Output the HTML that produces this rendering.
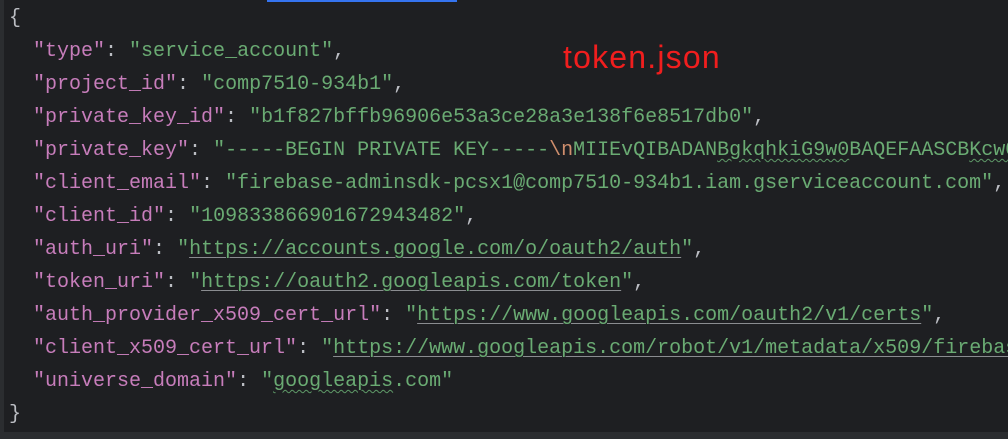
<!DOCTYPE html>
<html><head><style>
html,body{margin:0;padding:0;}
body{width:1008px;height:439px;background:#1e1f22;position:relative;overflow:hidden;font-family:"Liberation Mono",monospace;}
.strip{position:absolute;left:0;top:0;width:4px;height:439px;background:#2b2d30;}
.bot{position:absolute;left:0;top:432px;width:1008px;height:7px;background:#2b2d30;}
.blue{position:absolute;left:267px;top:0;width:190px;height:2px;background:#3574f0;}
pre{position:absolute;left:9px;top:2px;margin:0;font-family:"Liberation Mono",monospace;font-size:20px;line-height:33px;color:#bcbec4;white-space:pre;}
.k{color:#c77dbb}.s{color:#6aab73}.e{color:#cf8e6d}
.u{text-decoration:underline;text-decoration-color:#8a8c90;text-decoration-thickness:1px;text-underline-offset:3px}
.w{text-decoration:underline wavy #5f9a68;text-decoration-thickness:1px;text-underline-offset:3px}
.t{position:absolute;left:563px;top:39px;font-family:"Liberation Sans",sans-serif;font-size:32px;letter-spacing:1.2px;color:#f01e1e;}
</style></head><body>
<div class="strip"></div><div class="blue"></div><div class="bot"></div>
<pre>{
  <span class="k">"type"</span>: <span class="s">"service_account"</span>,
  <span class="k">"project_id"</span>: <span class="s">"comp7510-934b1"</span>,
  <span class="k">"private_key_id"</span>: <span class="s">"b1f827bffb96906e53a3ce28a3e138f6e8517db0"</span>,
  <span class="k">"private_key"</span>: <span class="s">"-----BEGIN PRIVATE KEY-----<span class="e">\n</span>MIIEvQIBADAN<span class="w">BgkqhkiG9w0</span>BAQEFAASCB<span class="w">Kcw0</span></span>
  <span class="k">"client_email"</span>: <span class="s">"firebase-adminsdk-pcsx1@comp7510-934b1.iam.gserviceaccount.com"</span>,
  <span class="k">"client_id"</span>: <span class="s">"109833866901672943482"</span>,
  <span class="k">"auth_uri"</span>: <span class="s">"<span class="u">https://accounts.google.com/o/oauth2/auth</span>"</span>,
  <span class="k">"token_uri"</span>: <span class="s">"<span class="u">https://oauth2.googleapis.com/token</span>"</span>,
  <span class="k">"auth_provider_x509_cert_url"</span>: <span class="s">"<span class="u">https://www.googleapis.com/oauth2/v1/certs</span>"</span>,
  <span class="k">"client_x509_cert_url"</span>: <span class="s">"<span class="u">https://www.googleapis.com/robot/v1/metadata/x509/firebase</span></span>
  <span class="k">"universe_domain"</span>: <span class="s">"<span class="w">googleapis</span>.com"</span>
}</pre>
<div class="t">token.json</div>
</body></html>
